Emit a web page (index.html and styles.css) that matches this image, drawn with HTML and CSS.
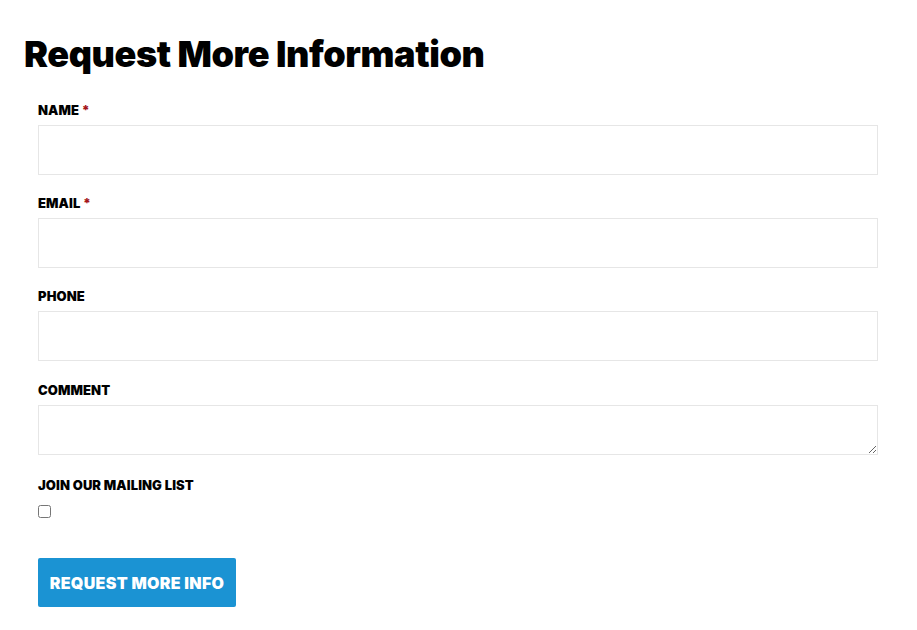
FILE: index.html
```html
<!DOCTYPE html>
<html>
<head>
<meta charset="utf-8">
<link rel="stylesheet" href="styles.css">
</head>
<body>
<main class="page">
  <h1 class="title">Request More Information</h1>
  <form class="form">
    <div class="field">
      <label class="label">NAME <span class="req">*</span></label>
      <input class="input" type="text">
    </div>
    <div class="field">
      <label class="label">EMAIL <span class="req">*</span></label>
      <input class="input" type="email">
    </div>
    <div class="field">
      <label class="label">PHONE</label>
      <input class="input" type="tel">
    </div>
    <div class="field field-comment">
      <label class="label">COMMENT</label>
      <textarea class="input textarea"></textarea>
    </div>
    <div class="field field-check">
      <label class="label">JOIN OUR MAILING LIST</label>
      <input class="check" type="checkbox">
    </div>
    <button class="btn" type="button">REQUEST MORE INFO</button>
  </form>
</main>
</body>
</html>
```
FILE: styles.css
```css
html, body {
  margin: 0;
  padding: 0;
  background: #fff;
}
body {
  font-family: Inter, "Liberation Sans", sans-serif;
  color: #000;
}
.page {
  padding: 32px 39px 0 24px;
}
.title {
  margin: 0;
  font-size: 36px;
  line-height: 44px;
  font-weight: 900;
  letter-spacing: -0.4px;
}
.form {
  display: flex;
  flex-direction: column;
  padding-left: 14px;
  margin-top: 26px;
}
.field {
  display: flex;
  flex-direction: column;
  margin-bottom: 20px;
}
.label {
  font-size: 13px;
  line-height: 16px;
  font-weight: 900;
  letter-spacing: 0.1px;
  margin-bottom: 7px;
}
.req {
  color: #a4161a;
}
.input {
  box-sizing: border-box;
  height: 50px;
  width: 100%;
  border: 1px solid #e6e6e6;
  border-radius: 0;
  margin: 0;
  padding: 8px 12px;
  font-family: inherit;
  font-size: 14px;
  background: #fff;
  outline: none;
}
.textarea {
  display: block;
  resize: vertical;
}
.field-comment {
  margin-top: 1px;
}
.field-check .label {
  margin-top: 2px;
  margin-bottom: 12px;
}
.check {
  margin: 0;
  width: 13px;
  height: 13px;
}
.field-check {
  margin-bottom: 40px;
}
.btn {
  align-self: flex-start;
  background: #1b93d3;
  color: #fff;
  border: none;
  border-radius: 2px;
  width: 198px;
  height: 49px;
  font-family: inherit;
  font-size: 16px;
  font-weight: 900;
  letter-spacing: 0.3px;
  padding: 0;
}
```
